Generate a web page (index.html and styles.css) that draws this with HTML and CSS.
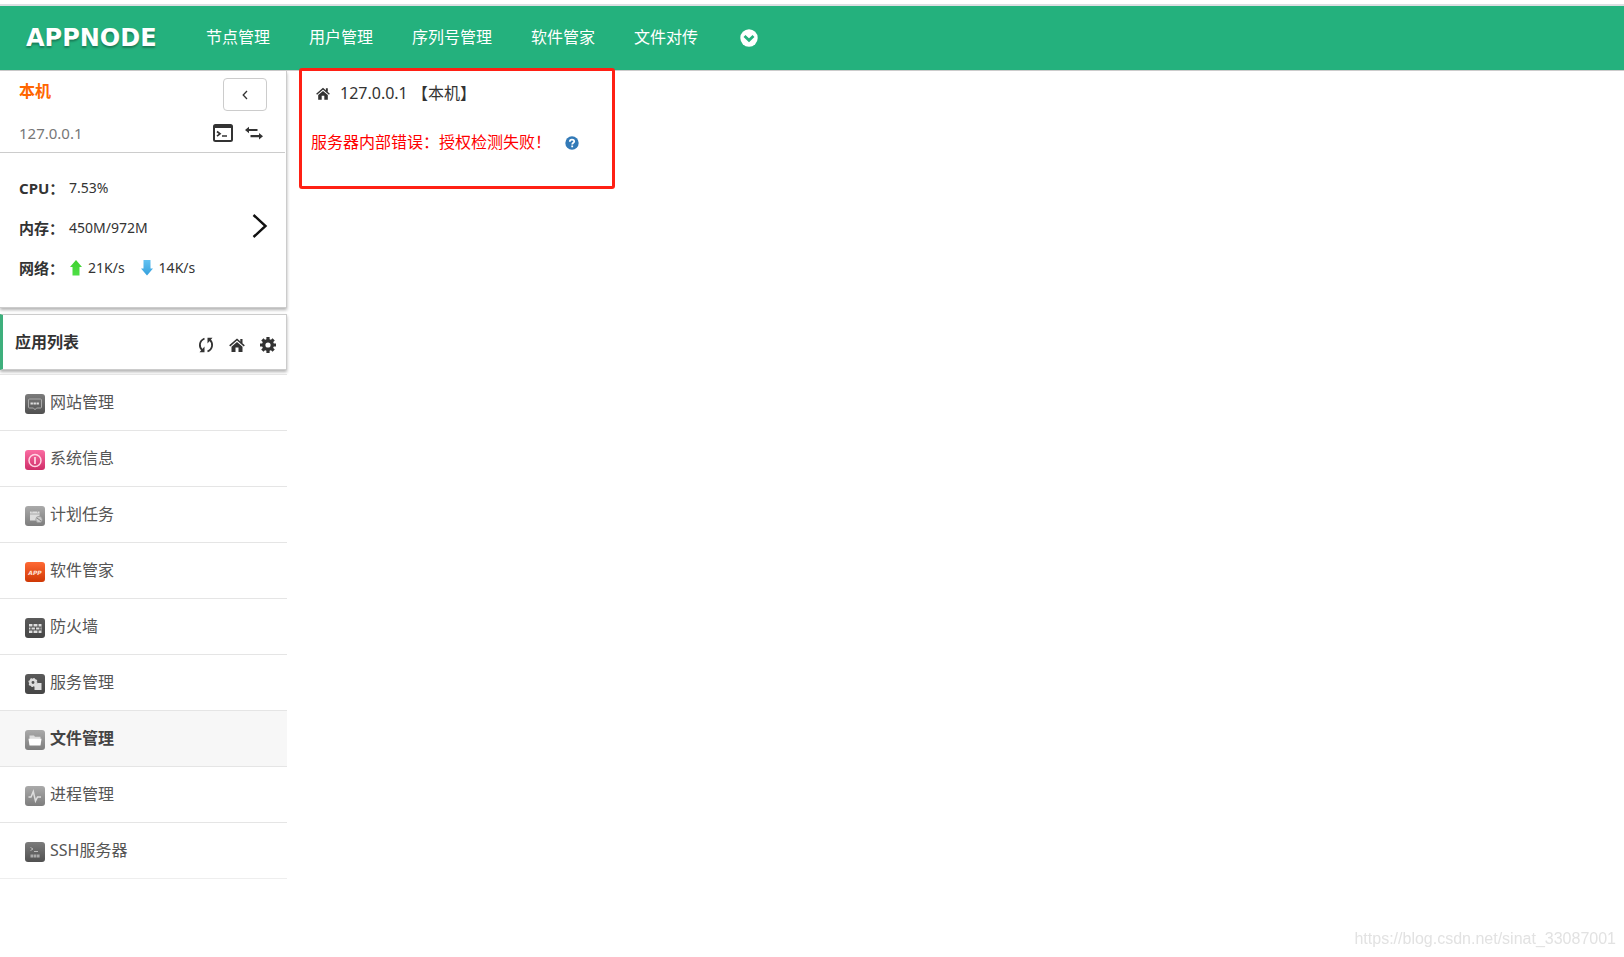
FILE: index.html
```html
<!DOCTYPE html>
<html lang="zh-CN">
<head>
<meta charset="utf-8">
<title>AppNode</title>
<link rel="stylesheet" href="styles.css">
</head>
<body>
<svg class="defs" width="0" height="0" aria-hidden="true">
  <defs>
    <linearGradient id="dark" x2="0" y2="1"><stop stop-color="#7c7c7c"/><stop offset="1" stop-color="#505050"/></linearGradient>
    <linearGradient id="coal" x2="0" y2="1"><stop stop-color="#5a5a5a"/><stop offset="1" stop-color="#454545"/></linearGradient>
    <linearGradient id="gray" x2="0" y2="1"><stop stop-color="#aaa"/><stop offset="1" stop-color="#7d7d7d"/></linearGradient>
    <linearGradient id="pink" x2="0" y2="1"><stop stop-color="#fb6da3"/><stop offset="1" stop-color="#cf2d68"/></linearGradient>
    <linearGradient id="orange" x2="0" y2="1"><stop stop-color="#ff6a35"/><stop offset="1" stop-color="#cf3805"/></linearGradient>
    <linearGradient id="blue" x2="0" y2="1"><stop stop-color="#62c2f2"/><stop offset="1" stop-color="#35a0dc"/></linearGradient>
    <linearGradient id="green" x2="0" y2="1"><stop stop-color="#3fd02f"/><stop offset="1" stop-color="#4ee046"/></linearGradient>
    <symbol id="home" viewBox="0 0 16 14">
      <path d="M8 4 13.500 8.700V14H9.500V9.500H6.500V14H2.500V8.700Z"/>
      <path d="M11.300 1h2.200v4h-2.200z"/>
      <path d="M.7 7.800 8 1.500l7.300 6.300" fill="none" stroke="currentColor" stroke-width="1.600"/>
    </symbol>
  </defs>
</svg>

<header class="topbar">
  <a class="logo" href="#">APPNODE</a>
  <nav class="nav">
    <a href="#">节点管理</a>
    <a href="#">用户管理</a>
    <a href="#">序列号管理</a>
    <a href="#">软件管家</a>
    <a href="#">文件对传</a>
    <button class="more" aria-label="更多">
      <svg width="18" height="18" viewBox="0 0 18 18"><circle cx="9" cy="9" r="8.700" fill="#fff"/><path d="m4.500 7 4.500 4.300L13.500 7" fill="none" stroke="#24b17d" stroke-width="2.800"/></svg>
    </button>
  </nav>
</header>

<div class="layout">
  <aside class="sidebar">
    <section class="node">
      <div class="node-head">
        <div class="node-row">
          <h2 class="node-name">本机</h2>
          <button class="collapse" aria-label="收起">
            <svg width="6" height="10" viewBox="0 0 6 10"><path d="M5 1 1.200 5 5 9" fill="none" stroke="currentColor" stroke-width="1.300"/></svg>
          </button>
        </div>
        <div class="node-row node-address">
          <span>127.0.0.1</span>
          <div class="node-tools">
            <button aria-label="终端">
              <svg width="20" height="18" viewBox="0 0 20 18"><g fill="none" stroke="currentColor"><rect x="1" y="1" width="18" height="16" rx="1.500" stroke-width="2"/><path d="M1 2.500h18" stroke-width="3"/><path d="m4 7.500 3 2.300-3 2.300M9 12h5" stroke-width="1.700"/></g></svg>
            </button>
            <button aria-label="切换">
              <svg width="18" height="14" viewBox="0 0 18 14"><path d="M0 4 4 .8v2.100h8.500v2.200H4v2.100ZM18 10.200l-4-3.200v2.100H5.500v2.200H14v2.100Z"/></svg>
            </button>
          </div>
        </div>
      </div>
      <div class="status">
        <dl class="stats">
          <div><dt>CPU：</dt><dd>7.53%</dd></div>
          <div><dt>内存：</dt><dd>450M/972M</dd></div>
          <div><dt>网络：</dt><dd class="net">
            <span><svg width="12" height="16" viewBox="0 0 12 16"><path d="m6 0 6 7H9.500v8.500h-7V7H0Z" fill="url(#green)"/></svg>21K/s</span>
            <span><svg width="12" height="16" viewBox="0 0 12 16"><path d="M6 15.500 12 8.500H9.500V0h-7v8.500H0Z" fill="url(#blue)"/></svg>14K/s</span>
          </dd></div>
        </dl>
        <button class="detail" aria-label="详情">
          <svg width="16" height="24" viewBox="0 0 16 24"><path d="m1.500 1 12 11-12 11" fill="none" stroke="#111" stroke-width="2.400"/></svg>
        </button>
      </div>
    </section>

    <section class="apps-head">
      <h2>应用列表</h2>
      <div class="apps-tools">
        <button aria-label="刷新">
          <svg width="16" height="16" viewBox="0 0 16 16"><path d="M6.500 1.500C1 4 .5 10 4.500 13.500M9.500 14.500C15 12 15.500 6 11.500 2.500" fill="none" stroke="currentColor" stroke-width="1.800"/><path d="M6.500 9.500v5.800H1.500ZM9.500 6.500V.7h5Z"/></svg>
        </button>
        <button aria-label="首页"><svg width="16" height="14"><use href="#home"/></svg></button>
        <button aria-label="设置">
          <svg width="16" height="16" viewBox="0 0 16 16"><circle cx="8" cy="8" r="4.300" fill="none" stroke="currentColor" stroke-width="3.400"/><path d="M8 0v3M8 13v3M0 8h3M13 8h3M2.350 2.350l2 2M11.650 11.650l2 2M2.350 13.650l2-2M11.650 4.350l2-2" stroke="currentColor" stroke-width="3.200"/></svg>
        </button>
      </div>
    </section>

    <nav class="apps">
      <a href="#"><svg class="app-icon" viewBox="0 0 20 20"><rect width="20" height="20" rx="3" fill="url(#dark)"/><path d="M4.500 5h11a1 1 0 0 1 1 1v7a1 1 0 0 1-1 1h-4L10 15.800 8.500 14h-4a1 1 0 0 1-1-1V6a1 1 0 0 1 1-1Z" fill="none" stroke="#aaa"/><path d="M5.500 9.500h9" stroke="#ddd" stroke-width="1.800" stroke-dasharray="2.400 .6"/></svg>网站管理</a>
      <a href="#"><svg class="app-icon" viewBox="0 0 20 20"><rect width="20" height="20" rx="3" fill="url(#pink)"/><circle cx="10" cy="10.500" r="6" fill="none" stroke="#ffd5e4" stroke-width="1.500"/><path d="M10 7v7" stroke="#ffd5e4" stroke-width="1.800"/></svg>系统信息</a>
      <a href="#"><svg class="app-icon" viewBox="0 0 20 20"><rect width="20" height="20" rx="3" fill="url(#gray)"/><path d="M5 5.500h9.500v9H5Z" fill="#ddd"/><path d="M7 4.500v2M12.500 4.500v2M5 8h9.500" stroke="#aaa"/><circle cx="14" cy="13.500" r="3.200" fill="#ccc" stroke="#999" stroke-width=".8"/><path d="m12 12 4 3" stroke="#888"/></svg>计划任务</a>
      <a href="#"><svg class="app-icon" viewBox="0 0 20 20"><rect width="20" height="20" rx="3" fill="url(#orange)"/><text x="10" y="12.500" text-anchor="middle" class="app-mark">APP</text></svg>软件管家</a>
      <a href="#"><svg class="app-icon" viewBox="0 0 20 20"><rect width="20" height="20" rx="3" fill="url(#coal)"/><rect x="4" y="6" width="12.500" height="9" fill="#ddd"/><path d="M4 9h12.500M4 12h12.500M8 6v3M13 6v3M6 9v3M10.500 9v3M15 9v3M8 12v3M13 12v3" stroke="#505050" stroke-width="1.100"/></svg>防火墙</a>
      <a href="#"><svg class="app-icon" viewBox="0 0 20 20"><rect width="20" height="20" rx="3" fill="url(#coal)"/><circle cx="8" cy="8.500" r="2.700" fill="none" stroke="#ddd" stroke-width="2.500"/><circle cx="8" cy="8.500" r="4" fill="none" stroke="#ddd" stroke-width="1.200" stroke-dasharray="1.600 1.500"/><path d="M9.500 10h2.200l1-1h3.800v7h-7Z" fill="#ddd"/></svg>服务管理</a>
      <a href="#" class="active" aria-current="page"><svg class="app-icon" viewBox="0 0 20 20"><rect width="20" height="20" rx="3" fill="url(#gray)"/><path d="M4.500 5.500h4.500l1 1.300h5.500v3h-11Z" fill="#ddd"/><path d="M3.500 8.800h13l-1 6.700h-11Z" fill="#fff"/></svg>文件管理</a>
      <a href="#"><svg class="app-icon" viewBox="0 0 20 20"><rect width="20" height="20" rx="3" fill="url(#gray)"/><path d="M3.500 11H6l2.300-5.500 2.200 9.500 2-4h3.500" fill="none" stroke="#ddd" stroke-width="1.500"/></svg>进程管理</a>
      <a href="#"><svg class="app-icon" viewBox="0 0 20 20"><rect width="20" height="20" rx="3" fill="url(#dark)"/><path d="m5.500 5.500 2.500 1.500-2.500 1.500M9 9.500h4" fill="none" stroke="#bbb"/><path d="M5.500 14h9.500" stroke="#aaa" stroke-width="3" stroke-dasharray="2.700 .5"/></svg>SSH服务器</a>
    </nav>
  </aside>

  <main class="content">
    <section class="notice">
      <h1 class="crumb"><svg width="14" height="13"><use href="#home"/></svg>127.0.0.1 【本机】</h1>
      <p class="error">服务器内部错误：授权检测失败！
        <a href="#" aria-label="帮助"><svg width="14" height="14" viewBox="0 0 14 14"><circle cx="7" cy="7" r="6.700" fill="#337ab7"/><path d="M4.800 5.700C4.800 2.800 9.200 3 9.200 5.400 9.200 6.900 7.200 6.800 7.200 8.600M7.200 9.500v1.700" fill="none" stroke="#fff" stroke-width="1.800"/></svg></a>
      </p>
    </section>
  </main>
</div>
<footer class="watermark">https://blog.csdn.net/sinat_33087001</footer>
</body>
</html>
```
FILE: styles.css
```css
* { box-sizing: border-box; }

body {
  margin: 0;
  padding-top: 4px;
  background: #fff;
  color: #333;
  font: 16px/24px "Noto Sans", "Noto Sans CJK SC", sans-serif;
}

h1, h2, p, dl, dd { margin: 0; }
a { color: inherit; text-decoration: none; }
svg { display: block; flex: none; fill: currentColor; }
button {
  padding: 0;
  border: 0;
  background: none;
  color: inherit;
  font: inherit;
  cursor: pointer;
}
.defs { position: absolute; }

.topbar {
  display: flex;
  align-items: center;
  height: 67px;
  padding-left: 26px;
  border-top: 2px solid #dcdfe2;
  border-bottom: 1px solid #ccc;
  background: #24b17d;
  color: #fff;
}
.logo {
  width: 180px;
  font: bold 24px/24px "DejaVu Sans", sans-serif;
  text-shadow: 0 2px 2px rgba(0, 0, 0, .3);
}
.nav { display: flex; align-items: center; gap: 39px; }
.nav a { padding-bottom: 2px; }
.more { margin-left: 3px; }

.layout { display: flex; align-items: flex-start; }
.sidebar { flex: none; width: 287px; }

.node {
  border-right: 1px solid #ccc;
  border-bottom: 1px solid #ccc;
  box-shadow: 0 2px 3px rgba(0, 0, 0, .3);
}
.node-head {
  padding: 7px 18px 5px 19px;
  margin-right: 1px;
  border-bottom: 1px solid #ccc;
}
.node-row { display: flex; justify-content: space-between; }
.node-name { color: #f60; font-size: 16px; font-weight: bold; line-height: 26px; }
.collapse {
  display: flex;
  align-items: center;
  justify-content: center;
  width: 44px;
  height: 33px;
  border: 1px solid #ccc;
  border-radius: 4px;
}
.node-address {
  align-items: center;
  height: 36px;
  padding-top: 8px;
  color: #777;
  font-size: 15px;
}
.node-tools { display: flex; align-items: center; gap: 12px; margin-right: 4px; color: #333; }
.status {
  display: flex;
  align-items: center;
  justify-content: space-between;
  padding: 15px 18px 19px 19px;
}
.stats { font-size: 14px; line-height: 40px; }
.stats div { display: flex; }
.stats dt { width: 50px; font-size: 15px; font-weight: bold; }
.net { display: flex; gap: 16px; padding-left: 1px; }
.net span { display: flex; align-items: center; gap: 6px; }
.detail { margin-bottom: 4px; }

.apps-head {
  display: flex;
  align-items: center;
  justify-content: space-between;
  height: 56px;
  margin-top: 6px;
  padding: 0 10px 0 12px;
  border: 1px solid #ccc;
  border-left: 3px solid #3eaf7c;
  box-shadow: 0 2px 3px rgba(0, 0, 0, .3);
}
.apps-head h2 { font-size: 16px; font-weight: bold; }
.apps-tools { display: flex; align-items: center; gap: 15px; padding-top: 6px; }

.apps { margin-top: 4px; border-bottom: 1px solid #eee; }
.apps a {
  display: flex;
  align-items: center;
  gap: 5px;
  height: 56px;
  padding: 0 0 2px 25px;
  border-top: 1px solid #e5e5e5;
  color: #555;
}
.apps .active { background: #f7f7f7; color: #444; font-weight: bold; }
.app-icon { width: 20px; height: 20px; margin-top: 4px; }
.app-mark { fill: #ffe3d8; font: italic bold 6px "DejaVu Sans", sans-serif; }

.content { flex: 1; padding-left: 12px; }
.notice {
  position: relative;
  width: 316px;
  max-width: 100%;
  margin-top: -3px;
  padding: 10px 9px 32px;
  border: 3px solid #ff2014;
  border-radius: 3px;
}
.crumb {
  display: flex;
  align-items: center;
  gap: 10px;
  padding-left: 5px;
  font-size: 16px;
  font-weight: normal;
}
.error { display: flex; align-items: center; gap: 14px; margin-top: 25px; color: #f00; }
.error a { padding-top: 2px; }

.watermark {
  position: fixed;
  right: 8px;
  bottom: 8px;
  color: #e2e2e2;
  font: 16px/20px "Liberation Sans", Arial, sans-serif;
}
```
